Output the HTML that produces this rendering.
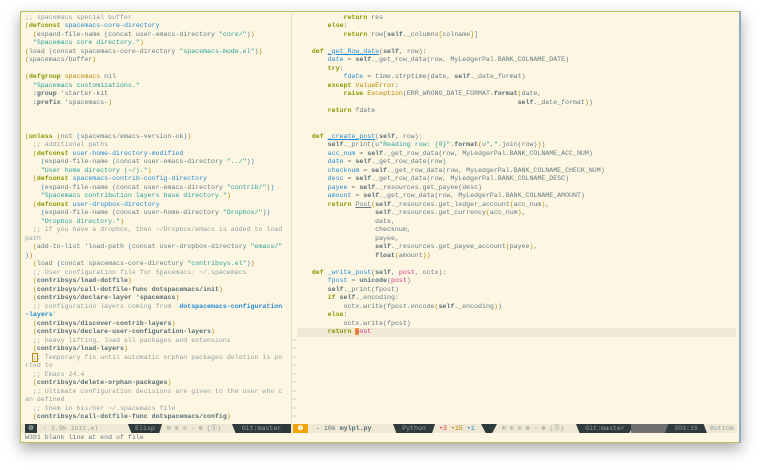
<!DOCTYPE html>
<html><head><meta charset="utf-8"><style>
body{margin:0;width:760px;height:470px;background:#fff;overflow:hidden;position:relative;font-family:"Liberation Mono",monospace;}
#win{position:absolute;left:20px;top:11px;width:718px;height:430px;background:#fdf6e3;border:1px solid #b3c25a;border-right:2px solid #8fa7c8;box-shadow:0 6px 14px rgba(0,0,0,.35);}
pre{margin:0;position:absolute;font-family:"Liberation Mono",monospace;font-size:6.6px;line-height:8.5px;color:#657b83;}
.c{color:#93a1a1}.k{color:#859900;font-weight:bold}.f{color:#268bd2}.s{color:#2aa198}.y{color:#b58900}.b{font-weight:bold;color:#586e75}.m{color:#d33682}.u{text-decoration:underline}
#div{position:absolute;left:270px;top:0;width:1px;height:412px;background:#e6dfc8}
#hl{position:absolute;left:276px;top:316px;width:439px;height:8.5px;background:#eee8d5}
.ml{position:absolute;top:412px;height:9px;font-size:6.6px;line-height:9px;color:#93a1a1;white-space:pre;font-family:"Liberation Mono","DejaVu Sans Mono",monospace}
.dk{background:#2f3a3c;color:#93a1a1}
</style></head><body>
<div id="win">
<div id="div"></div>
<div id="hl"></div>
<pre style="left:4px;top:1.5px"><span class="c">;; spacemacs special buffer</span>
<span class="y">(</span><span class="k">defconst</span> <span class="f">spacemacs-core-directory</span>
  <span class="y">(</span>expand-file-name (concat user-emacs-directory <span class="s">"core/"</span>)<span class="y">)</span>
  <span class="s">"Spacemacs core directory."</span><span class="y">)</span>
<span class="y">(</span>load (concat spacemacs-core-directory <span class="s">"spacemacs-mode.el"</span>)<span class="y">)</span>
<span class="y">(</span>spacemacs/buffer<span class="y">)</span>

<span class="y">(</span><span class="k">defgroup</span> <span class="y">spacemacs</span> nil
  <span class="s">"Spacemacs customizations."</span>
  <span class="b">:group</span> 'starter-kit
  <span class="b">:prefix</span> 'spacemacs-<span class="y">)</span>



<span class="y">(</span><span class="k">unless</span> <span class="y">(</span>not <span class="f">(</span>spacemacs/emacs-version-ok<span class="f">)</span><span class="y">)</span>
  <span class="c">;; additional paths</span>
  <span class="y">(</span><span class="k">defconst</span> <span class="f">user-home-directory-modified</span>
    <span class="f">(</span>expand-file-name (concat user-emacs-directory <span class="s">"../"</span>)<span class="f">)</span>
    <span class="s">"User home directory (~/)."</span><span class="y">)</span>
  <span class="y">(</span><span class="k">defconst</span> <span class="f">spacemacs-contrib-config-directory</span>
    <span class="f">(</span>expand-file-name (concat user-emacs-directory <span class="s">"contrib/"</span>)<span class="f">)</span>
    <span class="s">"Spacemacs contribution layers base directory."</span><span class="y">)</span>
  <span class="y">(</span><span class="k">defconst</span> <span class="f">user-dropbox-directory</span>
    <span class="f">(</span>expand-file-name (concat user-home-directory <span class="s">"Dropbox/"</span>)<span class="f">)</span>
    <span class="s">"Dropbox directory."</span><span class="y">)</span>
  <span class="c">;; if you have a dropbox, then ~/Dropbox/emacs is added to load</span>
<span class="c">path</span>
  <span class="y">(</span>add-to-list 'load-path <span class="f">(</span>concat user-dropbox-directory <span class="s">"emacs/"</span>
<span class="f">)</span><span class="y">)</span>
  <span class="y">(</span>load <span class="f">(</span>concat spacemacs-core-directory <span class="s">"contribsys.el"</span><span class="f">)</span><span class="y">)</span>
  <span class="c">;; User configuration file for Spacemacs: ~/.spacemacs</span>
  <span class="y">(</span><span class="b">contribsys/load-dotfile</span><span class="y">)</span>
  <span class="y">(</span><span class="b">contribsys/call-dotfile-func dotspacemacs/init</span><span class="y">)</span>
  <span class="y">(</span><span class="b">contribsys/declare-layer 'spacemacs</span><span class="y">)</span>
  <span class="c">;; configuration layers coming from `</span><span class="f" style="font-weight:bold">dotspacemacs-configuration</span>
<span class="f" style="font-weight:bold">-layers</span><span class="c">'</span>
  <span class="y">(</span><span class="b">contribsys/discover-contrib-layers</span><span class="y">)</span>
  <span class="y">(</span><span class="b">contribsys/declare-user-configuration-layers</span><span class="y">)</span>
  <span class="c">;; heavy lifting, load all packages and extensions</span>
  <span class="y">(</span><span class="b">contribsys/load-layers</span><span class="y">)</span>
  <span class="c"><span style="outline:1px solid #b58900">;</span>; Temporary fix until automatic orphan packages deletion is po</span>
<span class="c">rted to</span>
  <span class="c">;; Emacs 24.4</span>
  <span class="y">(</span><span class="b">contribsys/delete-orphan-packages</span><span class="y">)</span>
  <span class="c">;; Ultimate configuration decisions are given to the user who c</span>
<span class="c">an defined</span>
  <span class="c">;; them in his/her ~/.spacemacs file</span>
  <span class="y">(</span><span class="b">contribsys/call-dotfile-func dotspacemacs/config</span><span class="y">)</span></pre>
<pre style="left:275px;top:1.5px">            <span class="k">return</span> res
        <span class="k">else</span>:
            <span class="k">return</span> row[<span class="b">self</span>._columns<span class="y">[</span>colname<span class="y">]</span>]

    <span class="k">def</span> <span class="f u">_get_Row_date</span>(<span class="b">self</span>, row):
        <span class="f">date</span> = <span class="b">self</span>._get_row_data(row, MyLedgerPal.BANK_COLNAME_DATE)
        <span class="k">try</span>:
            <span class="f">fdate</span> = time.strptime(date, <span class="b">self</span>._date_format)
        <span class="k">except</span> <span class="y">ValueError</span>:
            <span class="k">raise</span> <span class="y">Exception</span>(ERR_WRONG_DATE_FORMAT.<span class="b">format</span><span class="y">(</span>date,
                                                        <span class="b">self</span>._date_format<span class="y">)</span>)
        <span class="k">return</span> fdate


    <span class="k">def</span> <span class="f u">_create_post</span>(<span class="b">self</span>, row):
        <span class="b">self</span>._print(u<span class="s">"Reading row: {0}"</span>.<span class="b">format</span><span class="y">(</span>u<span class="s">","</span>.join(row)<span class="y">)</span>)
        <span class="f">acc_num</span> = <span class="b">self</span>._get_row_data(row, MyLedgerPal.BANK_COLNAME_ACC_NUM)
        <span class="f">date</span> = <span class="b">self</span>._get_row_date(row)
        <span class="f">checknum</span> = <span class="b">self</span>._get_row_data(row, MyLedgerPal.BANK_COLNAME_CHECK_NUM)
        <span class="f">desc</span> = <span class="b">self</span>._get_row_data(row, MyLedgerPal.BANK_COLNAME_DESC)
        <span class="f">payee</span> = <span class="b">self</span>._resources.get_payee(desc)
        <span class="f">amount</span> = <span class="b">self</span>._get_row_data(row, MyLedgerPal.BANK_COLNAME_AMOUNT)
        <span class="k">return</span> <span class="u">Post</span><span class="y">(</span><span class="b">self</span>._resources.get_ledger_account<span class="y">(</span>acc_num<span class="y">)</span>,
                    <span class="b">self</span>._resources.get_currency<span class="y">(</span>acc_num<span class="y">)</span>,
                    date,
                    checknum,
                    payee,
                    <span class="b">self</span>._resources.get_payee_account<span class="y">(</span>payee<span class="y">)</span>,
                    <span class="b">float</span><span class="y">(</span>amount<span class="y">))</span>

    <span class="k">def</span> <span class="f">_write_post</span>(<span class="b">self</span>, <span class="m">post</span>, octx):
        <span class="f">fpost</span> = <span class="b">unicode</span>(<span class="m">post</span>)
        <span class="b">self</span>._print(fpost)
        <span class="k">if</span> <span class="b">self</span>._encoding:
            octx.write(fpost.encode<span class="y">(</span><span class="b">self</span>._encoding<span class="y">)</span>)
        <span class="k">else</span>:
            octx.write(fpost)
        <span class="k">return</span> <span class="m"><span style="background:#f0a030">p</span>ost</span></pre>
<pre style="left:271px;top:324.5px;color:#93a1a1">~
~
~
~
~
~
~
~
~
~</pre>
<div class="ml" style="left:0;width:716px;background:#eee8d5"></div>
<div class="ml dk" style="left:4px;width:12px;text-align:center">❶</div>
<div class="ml" style="left:22px">- 1.9k init.el</div>
<div class="ml dk" style="left:107px;width:34px;text-align:center;clip-path:polygon(0 0,100% 0,92% 100%,10% 100%)">Elisp</div>
<div class="ml" style="left:146px">⊞ ⊕ ⊙ - ⊛ (Ⓢ)</div>
<div class="ml dk" style="left:211px;width:59px;text-align:center;clip-path:polygon(0 0,100% 0,100% 100%,6% 100%)">Git:master</div>
<div class="ml" style="left:272px;width:15px;background:#f0a30a;color:#fff;text-align:center">❶</div>
<div class="ml" style="left:295px;color:#586e75">- 10k <b>mylpl.py</b></div>
<div class="ml dk" style="left:372px;width:42px;text-align:center;clip-path:polygon(0 0,100% 0,93% 100%,8% 100%)">Python</div>
<div class="ml" style="left:418px"><span style="color:#dc322f">•3</span> <span style="color:#b58900">•15</span> <span style="color:#268bd2">•1</span></div>
<div class="ml dk" style="left:460px;width:16px;clip-path:polygon(0 0,100% 0,70% 100%,30% 100%)"></div>
<div class="ml" style="left:481px">⊞ ⊕ ⊙ ⊛ - ⊛ (Ⓢ)</div>
<div class="ml dk" style="left:555px;width:58px;text-align:center;clip-path:polygon(0 0,100% 0,92% 100%,6% 100%)">Git:master</div>
<div class="ml" style="left:610px;width:40px;background:#6f6f6f"></div>
<div class="ml dk" style="left:644px;width:42px;text-align:center;clip-path:polygon(8% 0,92% 0,100% 100%,0 100%)">303:15</div>
<div class="ml" style="left:689px;color:#93a1a1">Bottom</div>
<pre style="left:4px;top:421px;color:#657b83;line-height:9px">W391 blank line at end of file</pre>
</div>
</body></html>
